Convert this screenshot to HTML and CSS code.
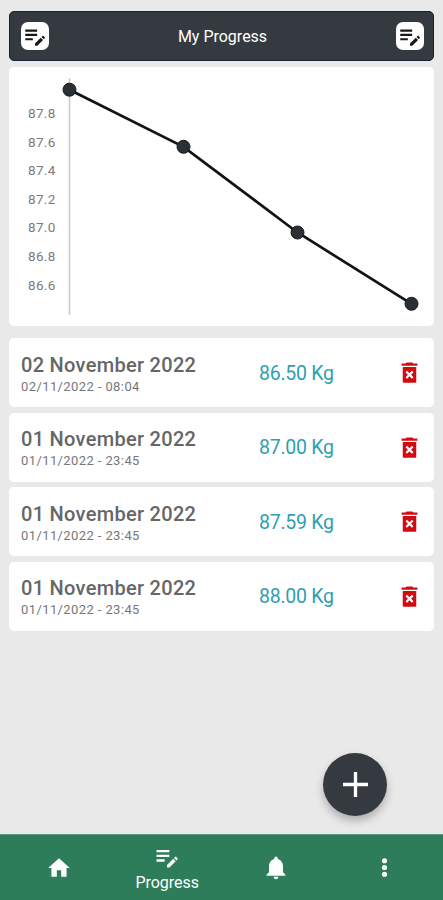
FILE: index.html
```html
<!DOCTYPE html>
<html lang="en">
<head>
    <meta charset="UTF-8">
    <meta name="viewport" content="width=device-width, initial-scale=1.0">
    <title>My Progress</title>
    <link rel="stylesheet" href="styles.css">
</head>
<body>
    <svg class="symbols">
        <symbol id="edit-note" viewBox="0 0 24 24">
            <path d="M3 10h11v2H3v-2zm0-2h11V6H3v2zm0 6v2h7v-2H3zm15.01-1.13.71-.71c.39-.39 1.02-.39 1.41 0l.71.71c.39.39.39 1.02 0 1.41l-.71.71-2.12-2.12zm-.71.71-5.3 5.3V21h2.12l5.3-5.3-2.12-2.12z"/>
        </symbol>
        <symbol id="trash" viewBox="0 0 24 24">
            <path d="M6 20.2c0 .5.3.8.8.8h10.4c.5 0 .8-.3.8-.8V7H6v13.2zm2.46-8.32 1.41-1.41L12 12.59l2.12-2.12 1.41 1.41L13.41 14l2.12 2.12-1.41 1.41L12 15.41l-2.12 2.12-1.41-1.41L10.59 14l-2.13-2.12zM15.5 4l-1-1h-5l-1 1H5v2h14V4z"/>
        </symbol>
    </svg>

    <main>
        <header>
            <button class="header-btn"><svg><use href="#edit-note"/></svg></button>
            <h1>My Progress</h1>
            <button class="header-btn"><svg><use href="#edit-note"/></svg></button>
        </header>

        <section class="chart">
            <svg viewBox="0 0 425 259">
                <line class="axis" x1="60.5" y1="11" x2="60.5" y2="248"/>
                <g class="labels">
                    <text x="19" y="51">87.8</text>
                    <text x="19" y="79.6">87.6</text>
                    <text x="19" y="108.2">87.4</text>
                    <text x="19" y="136.8">87.2</text>
                    <text x="19" y="165.4">87.0</text>
                    <text x="19" y="194">86.8</text>
                    <text x="19" y="222.6">86.6</text>
                </g>
                <polyline class="line" points="60.5,22.7 174.5,79.8 288.5,165.5 402.5,236.8"/>
                <g class="dots">
                    <circle cx="60.5" cy="22.7" r="6.5"/>
                    <circle cx="174.5" cy="79.8" r="6.5"/>
                    <circle cx="288.5" cy="165.5" r="6.5"/>
                    <circle cx="402.5" cy="236.8" r="6.5"/>
                </g>
            </svg>
        </section>

        <section class="entries">
            <div class="entry">
                <div class="date">
                    <h2>02 November 2022</h2>
                    <p>02/11/2022 - 08:04</p>
                </div>
                <div class="weight">86.50 Kg</div>
                <button class="delete"><svg><use href="#trash"/></svg></button>
            </div>
            <div class="entry">
                <div class="date">
                    <h2>01 November 2022</h2>
                    <p>01/11/2022 - 23:45</p>
                </div>
                <div class="weight">87.00 Kg</div>
                <button class="delete"><svg><use href="#trash"/></svg></button>
            </div>
            <div class="entry">
                <div class="date">
                    <h2>01 November 2022</h2>
                    <p>01/11/2022 - 23:45</p>
                </div>
                <div class="weight">87.59 Kg</div>
                <button class="delete"><svg><use href="#trash"/></svg></button>
            </div>
            <div class="entry">
                <div class="date">
                    <h2>01 November 2022</h2>
                    <p>01/11/2022 - 23:45</p>
                </div>
                <div class="weight">88.00 Kg</div>
                <button class="delete"><svg><use href="#trash"/></svg></button>
            </div>
        </section>
    </main>

    <button class="add-btn">
        <svg viewBox="0 0 24 24"><path d="M0 12h24M12 0v24"/></svg>
    </button>

    <nav class="nav-bar">
        <a href="#"><svg class="home" viewBox="0 0 24 24"><path d="M10 20v-6h4v6h5v-8h3L12 3 2 12h3v8z"/></svg></a>
        <a href="#" class="active"><svg><use href="#edit-note"/></svg><span>Progress</span></a>
        <a href="#"><svg class="bell" viewBox="0 0 24 24"><path d="M12 22c1.1 0 2-.9 2-2h-4c0 1.1.89 2 2 2zm6-6v-5c0-3.07-1.64-5.64-4.5-6.32V4c0-.83-.67-1.5-1.5-1.5s-1.5.67-1.5 1.5v.68C7.63 5.36 6 7.92 6 11v5l-2 2v1h16v-1l-2-2z"/></svg></a>
        <a href="#"><svg class="more" viewBox="0 0 24 24"><circle cx="12" cy="6" r="2.3"/><circle cx="12" cy="12" r="2.3"/><circle cx="12" cy="18" r="2.3"/></svg></a>
    </nav>
</body>
</html>
```
FILE: styles.css
```css
* {
    margin: 0;
    padding: 0;
    box-sizing: border-box;
    font-family: Roboto, sans-serif;
}

body {
    height: 900px;
    display: flex;
    flex-direction: column;
    position: relative;
    overflow: hidden;
    background-color: #e9e9e9;
}

button {
    border: none;
    background: none;
    cursor: pointer;
}

svg {
    display: block;
}

.symbols {
    position: absolute;
    width: 0;
    height: 0;
}

main {
    flex: 1;
    padding: 11px 9px 0;
}

header {
    display: flex;
    justify-content: space-between;
    align-items: center;
    height: 50px;
    padding: 0 9px 0 11px;
    background-color: #343a40;
    border: 1px solid #1b1e35;
    border-radius: 5px;
}

header h1 {
    font-size: 16px;
    font-weight: 400;
    color: #fff;
}

.header-btn {
    width: 28px;
    height: 28px;
    background-color: #fff;
    border-radius: 7px;
}

.header-btn svg {
    width: 26px;
    height: 26px;
    margin-left: 1px;
    fill: #16191c;
}

.chart {
    height: 259px;
    margin-top: 6px;
    background-color: #fff;
    border-radius: 5px;
}

.chart svg {
    width: 425px;
    height: 259px;
}

.axis {
    stroke: #c9c9c9;
    stroke-width: 1.5;
}

.labels text {
    font-size: 13.5px;
    letter-spacing: 0.35px;
    fill: #7b7b7b;
}

.line {
    fill: none;
    stroke: #111316;
    stroke-width: 2.7;
}

.dots circle {
    fill: #2b3036;
    stroke: #17191c;
    stroke-width: 1;
}

.entries {
    display: flex;
    flex-direction: column;
    gap: 5.5px;
    margin-top: 12px;
}

.entry {
    display: flex;
    align-items: center;
    height: 69px;
    padding: 0 11px 0 12px;
    background-color: #fff;
    border-radius: 5px;
}

.date {
    width: 238px;
    padding-top: 2px;
}

.date h2 {
    font-size: 20px;
    line-height: 24px;
    font-weight: 500;
    letter-spacing: 0.3px;
    color: #666;
}

.date p {
    font-size: 13px;
    line-height: 16px;
    margin-top: 2px;
    letter-spacing: 0.4px;
    color: #777;
}

.weight {
    flex: 1;
    padding-top: 1px;
    font-size: 19.5px;
    letter-spacing: -0.25px;
    color: #2e9fb0;
}

.delete svg {
    width: 27px;
    height: 27px;
    fill: #d00b12;
}

.add-btn {
    position: absolute;
    left: 323px;
    top: 753px;
    width: 64px;
    height: 63px;
    display: flex;
    align-items: center;
    justify-content: center;
    background-color: #343a40;
    border-radius: 50%;
    box-shadow: 0 5px 8px rgba(0, 0, 0, 0.25);
}

.add-btn svg {
    width: 25px;
    height: 25px;
    stroke: #fff;
    stroke-width: 3.2;
}

.nav-bar {
    display: flex;
    height: 66px;
    padding: 0 4.5px;
    background-color: #2e7d5a;
    border-top: 1px solid #5c9a80;
}

.nav-bar a {
    flex: 1;
    display: flex;
    flex-direction: column;
    align-items: center;
    justify-content: center;
    font-size: 16px;
    line-height: 21px;
    color: #fff;
    text-decoration: none;
}

.nav-bar span {
    padding-top: 1px;
}

.nav-bar svg {
    width: 28px;
    height: 28px;
    fill: #fff;
}

.nav-bar .home {
    width: 26px;
    height: 26px;
}

.nav-bar .bell {
    height: 29px;
}

.nav-bar .more {
    width: 27px;
    height: 27px;
}
```
